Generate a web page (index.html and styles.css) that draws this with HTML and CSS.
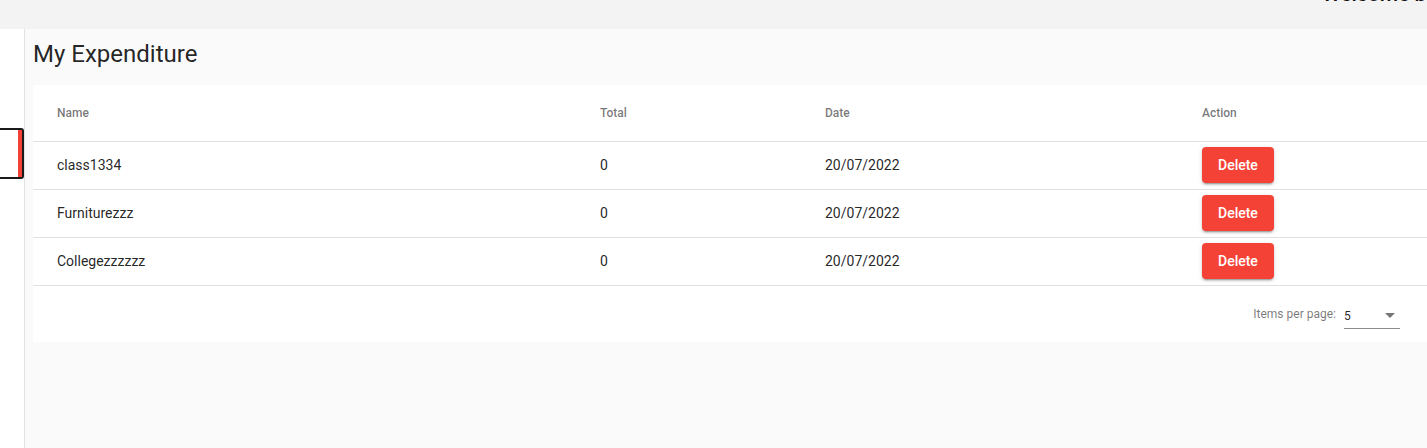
FILE: index.html
```html
<!DOCTYPE html>
<html>
<head>
<meta charset="utf-8">
<link rel="stylesheet" href="styles.css">
</head>
<body>
<div class="page">
  <header class="topbar">
    <span class="welcome">Welcome back</span>
  </header>
  <div class="body">
    <aside class="sidebar">
      <div class="nav-item"></div>
    </aside>
    <main class="main">
      <h1 class="title">My Expenditure</h1>
      <section class="card">
        <div class="row head">
          <div class="cell first">Name</div>
          <div class="cell">Total</div>
          <div class="cell">Date</div>
          <div class="cell">Action</div>
        </div>
        <div class="row">
          <div class="cell first">class1334</div>
          <div class="cell">0</div>
          <div class="cell">20/07/2022</div>
          <div class="cell"><button class="btn-delete">Delete</button></div>
        </div>
        <div class="row">
          <div class="cell first">Furniturezzz</div>
          <div class="cell">0</div>
          <div class="cell">20/07/2022</div>
          <div class="cell"><button class="btn-delete">Delete</button></div>
        </div>
        <div class="row">
          <div class="cell first">Collegezzzzzz</div>
          <div class="cell">0</div>
          <div class="cell">20/07/2022</div>
          <div class="cell"><button class="btn-delete">Delete</button></div>
        </div>
        <div class="paginator">
          <span class="pp-label">Items per page:</span>
          <div class="pp-select">
            <span class="pp-value">5</span>
            <span class="pp-arrow"></span>
          </div>
          <span class="pp-range">1 – 3 of 3</span>
          <span class="pp-nav"></span>
        </div>
      </section>
    </main>
  </div>
</div>
</body>
</html>
```
FILE: styles.css
```css
html, body {
  margin: 0;
  padding: 0;
  overflow: hidden;
  background: #fafafa;
}
body {
  font-family: Roboto, "Noto Sans", sans-serif;
  color: rgba(0, 0, 0, 0.87);
}
.page {
  width: 1700px;
  height: 448px;
  display: flex;
  flex-direction: column;
}
.topbar {
  height: 29px;
  background: #f3f3f3;
  overflow: hidden;
  display: flex;
  flex-shrink: 0;
}
.welcome {
  margin-left: 1322px;
  margin-top: -18px;
  font-size: 21px;
  line-height: 25px;
  font-weight: 500;
  color: #111;
  white-space: nowrap;
}
.body {
  flex: 1;
  display: flex;
}
.sidebar {
  width: 24px;
  background: #fff;
  border-right: 1px solid #e2e2e2;
  flex-shrink: 0;
  overflow: hidden;
  position: relative;
}
.nav-item {
  position: absolute;
  top: 99px;
  right: 0;
  width: 200px;
  height: 47px;
  border: 2px solid #1a1a1a;
  border-radius: 3px;
  background: #fff;
}
.nav-item::after {
  content: "";
  position: absolute;
  top: 0;
  bottom: 0;
  right: 0;
  width: 4px;
  background: #f44336;
}
.main {
  flex: 1;
  background: #fafafa;
  padding: 9px 0 0 8px;
}
.title {
  margin: 0 0 15px 0;
  font-size: 24px;
  line-height: 32px;
  font-weight: 400;
  color: rgba(0, 0, 0, 0.87);
}
.card {
  width: 1566px;
  background: #fff;
}
.row {
  display: grid;
  grid-template-columns: 567px 225px 377px 1fr;
  height: 48px;
  box-sizing: border-box;
  border-bottom: 1px solid #e0e0e0;
  align-items: center;
  font-size: 14px;
  padding-bottom: 2px;
}
.row.head {
  height: 57px;
  font-size: 12px;
  font-weight: 500;
  color: rgba(0, 0, 0, 0.54);
  padding-bottom: 1px;
}
.cell.first {
  padding-left: 24px;
}
.btn-delete {
  font-family: Roboto, sans-serif;
  font-size: 14px;
  font-weight: 500;
  color: #fff;
  background: #f44336;
  border: none;
  border-radius: 4px;
  height: 36px;
  min-width: 64px;
  padding: 0 16px;
  margin-top: 1px;
  box-shadow: 0 3px 1px -2px rgba(0,0,0,.2), 0 2px 2px 0 rgba(0,0,0,.14), 0 1px 5px 0 rgba(0,0,0,.12);
}
.paginator {
  height: 56px;
  display: flex;
  align-items: center;
  justify-content: flex-end;
  padding: 0 8px;
  font-size: 12px;
  color: rgba(0, 0, 0, 0.54);
}
.pp-label {
  margin: 0 4px;
}
.pp-select {
  width: 56px;
  margin: 6px 4px 0 4px;
  height: 24px;
  box-sizing: border-box;
  border-bottom: 1px solid #8c8c8c;
  display: flex;
  align-items: center;
  justify-content: space-between;
  color: rgba(0, 0, 0, 0.87);
  padding-bottom: 2px;
}
.pp-value {
  font-size: 12px;
}
.pp-arrow {
  width: 0;
  height: 0;
  border-left: 5px solid transparent;
  border-right: 5px solid transparent;
  border-top: 5px solid rgba(0, 0, 0, 0.54);
  margin-right: 5px;
}
.pp-range {
  margin: 0 32px 0 24px;
}
.pp-nav {
  width: 80px;
}
```
